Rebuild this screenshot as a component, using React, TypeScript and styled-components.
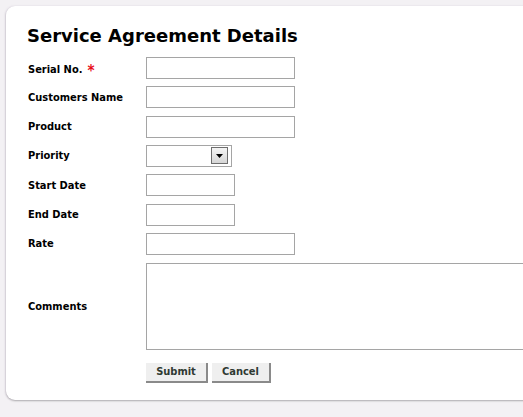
import React from 'react';
import styled, { createGlobalStyle } from 'styled-components';

const GlobalStyle = createGlobalStyle`
    html, body {
        margin: 0;
        padding: 0;
        background: #f3f1f4;
        overflow: hidden;
    }
    body {
        font-family: "DejaVu Sans", Verdana, sans-serif;
    }
`;

const Page = styled.div`
    width: 523px;
    height: 417px;
    padding: 6px 0 0 6px;
    box-sizing: border-box;
`;

const Card = styled.div`
    width: 540px;
    height: 394px;
    box-sizing: border-box;
    background: #ffffff;
    border-radius: 9px;
    box-shadow: 0 1px 2px rgba(0, 0, 0, 0.28), -1px 0 2px rgba(200, 190, 210, 0.35);
    padding: 18px 0 0 21px;
`;

const Title = styled.h1`
    margin: 0 0 9px 0;
    font-family: "DejaVu Sans", Verdana, sans-serif;
    font-size: 18px;
    font-weight: bold;
    color: #000;
    line-height: 24px;
`;

const Form = styled.form`
    display: grid;
    grid-template-columns: 119px auto;
    row-gap: 7.33px;
    align-items: center;
`;

const Label = styled.label`
    font-family: "DejaVu Sans Condensed", "DejaVu Sans", Verdana, sans-serif;
    font-size: 11px;
    font-weight: bold;
    color: #000;
    padding-left: 1px;
`;

const Required = styled.span`
    color: #e8101a;
    font-size: 15px;
    margin-left: 5px;
    position: relative;
    top: 3px;
`;

const TextInput = styled.input<{ $width: number }>`
    width: ${p => p.$width}px;
    height: 22px;
    box-sizing: border-box;
    border: 1px solid #a5a5a5;
    background: #fff;
    margin: 0;
    padding: 2px 4px;
    font-size: 11px;
`;

const SelectBox = styled.div`
    width: 86px;
    height: 22px;
    box-sizing: border-box;
    border: 1px solid #a5a5a5;
    background: #fff;
    display: flex;
    justify-content: flex-end;
    align-items: center;
    padding-right: 3px;
`;

const ArrowButton = styled.div`
    width: 17px;
    height: 17px;
    box-sizing: border-box;
    border: 1px solid #6e6e6e;
    background: linear-gradient(#f4f4f4, #d6d6d6);
    display: flex;
    align-items: center;
    justify-content: center;
`;

const Comments = styled.textarea`
    width: 400px;
    height: 87px;
    box-sizing: border-box;
    border: 1px solid #a5a5a5;
    resize: none;
    margin: 1px 0 0 0;
    display: block;
`;

const Buttons = styled.div`
    grid-column: 2;
    display: flex;
    gap: 4px;
    margin-top: 5px;
`;

const Button = styled.button<{ $width: number }>`
    width: ${p => p.$width}px;
    height: 20px;
    box-sizing: border-box;
    background: #efefef;
    border: none;
    border-right: 2px solid #8a8a8a;
    border-bottom: 2px solid #8a8a8a;
    font-family: "DejaVu Sans Condensed", "DejaVu Sans", Verdana, sans-serif;
    font-size: 11px;
    font-weight: bold;
    color: #2f3a33;
    padding: 0;
    cursor: pointer;
`;

export default function App() {
    return (
        <>
            <GlobalStyle />
            <Page>
                <Card>
                    <Title>Service Agreement Details</Title>
                    <Form onSubmit={e => e.preventDefault()}>
                        <Label>Serial No.<Required>*</Required></Label>
                        <TextInput $width={149} />
                        <Label>Customers Name</Label>
                        <TextInput $width={149} />
                        <Label>Product</Label>
                        <TextInput $width={149} />
                        <Label>Priority</Label>
                        <SelectBox>
                            <ArrowButton>
                                <svg width="7" height="4" viewBox="0 0 7 4">
                                    <polygon points="0,0 7,0 3.5,4" fill="#000" />
                                </svg>
                            </ArrowButton>
                        </SelectBox>
                        <Label>Start Date</Label>
                        <TextInput $width={89} />
                        <Label>End Date</Label>
                        <TextInput $width={89} />
                        <Label>Rate</Label>
                        <TextInput $width={149} />
                        <Label>Comments</Label>
                        <Comments />
                        <Buttons>
                            <Button $width={62}>Submit</Button>
                            <Button $width={59}>Cancel</Button>
                        </Buttons>
                    </Form>
                </Card>
            </Page>
        </>
    );
}
